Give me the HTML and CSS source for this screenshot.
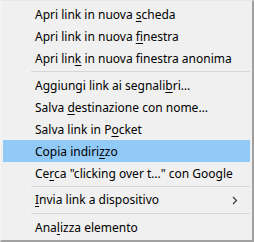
FILE: index.html
```html
<!DOCTYPE html>
<html lang="it">
<head>
  <meta charset="UTF-8" />
  <title>Menu contestuale</title>
  <link rel="stylesheet" href="styles.css">
</head>
<body>
  <div class="menu">
    <div class="item">Apri link in nuova <u>s</u>cheda</div>
    <div class="item">Apri link in nuova <u>f</u>inestra</div>
    <div class="item">Apri lin<u>k</u> in nuova finestra anonima</div>
    <div class="sep"></div>
    <div class="item">Aggiungi link ai segnali<u>b</u>ri…</div>
    <div class="item">Salva <u>d</u>estinazione con nome…</div>
    <div class="item">Salva link in P<u>o</u>cket</div>
    <div class="item active">Copia indiri<u>z</u>zo</div>
    <div class="item">Ce<u>r</u>ca "clicking over t…" con Google</div>
    <div class="sep"></div>
    <div class="item submenu"><span><u>I</u>nvia link a dispositivo</span>
      <svg class="arrow" width="6" height="9" viewBox="0 0 6 9"><path d="M1 1 L4.5 4.5 L1 8" fill="none" stroke="#333" stroke-width="1.1"/></svg>
    </div>
    <div class="sep"></div>
    <div class="item">Ana<u>l</u>izza elemento</div>
  </div>
</body>
</html>
```

FILE: styles.css
```css
/* Pagina */
body {
  margin: 0;
  padding: 0;
  background: #f0f0f0;
  font-family: "Noto Sans", "Open Sans", sans-serif;
  font-size: 12px;
  color: #000;
}

/* Contenitore del menu */
.menu {
  width: 254px;
  height: 242px;
  box-sizing: border-box;
  background: #f0f0f0;
  border-top: 1px solid #ece6e6;
  border-left: 1px solid #f4f4f4;
  border-right: 2px solid #a0a0a0;
  border-bottom: 2px solid #a0a0a0;
  padding: 2px 2px 0 2px;
}

/* Voci */
.item {
  height: 22px;
  line-height: 24px;
  padding-left: 32px;
  white-space: nowrap;
}

.item u {
  text-underline-offset: 2px;
}

.item.active {
  background: #91c9f7;
}

.submenu {
  display: flex;
  align-items: center;
  justify-content: space-between;
  padding-right: 12px;
}

/* Separatori */
.sep {
  height: 5px;
  margin-left: 28px;
  box-sizing: border-box;
  padding-top: 2px;
}

.sep::before {
  content: "";
  display: block;
  height: 1px;
  background: #d7d7d7;
}
```
